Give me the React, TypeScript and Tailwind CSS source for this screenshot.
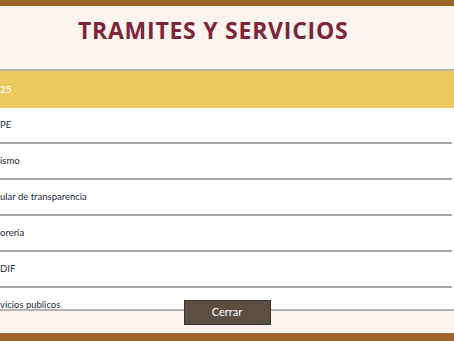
import React from 'react';

const rows = ['PE', 'ismo', 'ular de transparencia', 'oreria', 'DIF', 'vicios publicos'];

export default function App() {
  return (
    <div className="w-[454px] h-[341px] overflow-hidden bg-[#fdf3ef] flex flex-col" style={{ fontFamily: '"Lato", "Open Sans", sans-serif' }}>
      <div className="h-[6px] bg-[#a0652b] shrink-0" />
      <div className="h-[63px] shrink-0 flex border-b border-white pl-[78px]">
        <h1 className="pt-[9px] text-[23px] leading-[30px] font-bold text-[#7e2639] tracking-[0.75px]" style={{ fontFamily: '"Open Sans", sans-serif' }}>
          TRAMITES Y SERVICIOS
        </h1>
      </div>
      <div className="flex-1 min-h-0 overflow-hidden border-t-2 border-[#b3b3b3]">
        <div className="h-[37px] bg-[#eeca5e] flex items-center text-[10px] text-white font-medium">25</div>
        {rows.map(r => (
          <div key={r} className="bg-white">
            <div className="h-[36px] mr-[2px] border-b-2 border-[#a8a8a8] flex items-center text-[9.5px] text-[#1d2b3a]">{r}</div>
          </div>
        ))}
      </div>
      <div className="h-[24px] shrink-0 border-t-2 border-[#b3b3b3] border-b border-b-white flex justify-center">
        <button className="-mt-[11px] h-[25px] w-[87px] bg-[#5d4e43] border border-[#3e342d] text-white text-[11px] relative z-10">Cerrar</button>
      </div>
      <div className="h-[8px] bg-[#a0652b] shrink-0" />
    </div>
  );
}
